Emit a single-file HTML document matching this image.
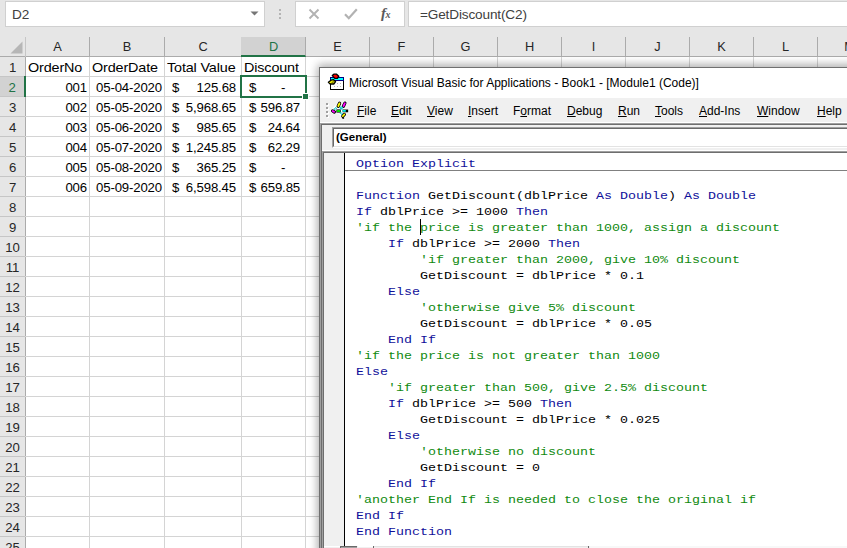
<!DOCTYPE html><html><head><meta charset="utf-8"><title>VBA</title><style>
*{box-sizing:border-box;margin:0;padding:0}
html,body{width:847px;height:548px;overflow:hidden;background:#fff}
body{position:relative;font-family:"Liberation Sans",sans-serif;}
.abs{position:absolute}
#top{left:0;top:0;width:847px;height:37px;background:#e6e6e6}
.box{background:#fff;border:1px solid #d0d0d0;position:absolute}
.xl{font-family:"Liberation Sans",sans-serif;font-size:14.4px;color:#000;white-space:pre;letter-spacing:-0.15px}
#hdr{left:0;top:37px;width:847px;height:20px;background:#e6e6e6;border-bottom:1px solid #ababab}
.ch{position:absolute;top:37px;height:20px;line-height:19px;text-align:center;font-size:12.8px;color:#262626;border-right:1px solid #ababab}
.rh{position:absolute;left:0;width:26px;height:20px;line-height:21px;text-align:center;font-size:13.2px;color:#262626;background:#e6e6e6;border-bottom:1px solid #c6c6c6;border-right:1px solid #ababab;letter-spacing:-0.15px}
.vl{position:absolute;width:1px;background:#d4d4d4;top:57px;height:500px}
.hl{position:absolute;height:1px;background:#d4d4d4;left:25px;width:830px}
.cell{position:absolute;height:20px;line-height:22px;}
.r{text-align:right;font-size:13.2px;line-height:21px}.n{font-size:13.2px;line-height:21px}.t{transform:scaleY(0.92);transform-origin:0 6px}
#vba{left:320px;top:69px;width:540px;height:490px;background:#fff;border:1px solid #6e6e6e}
.menu{position:absolute;top:0;font-size:12px;line-height:14px;color:#000;white-space:pre}
.menu u{text-decoration:underline;text-underline-offset:1px}
.code{position:absolute;left:356px;font-family:"Liberation Mono",monospace;font-size:13.33px;line-height:16px;white-space:pre;color:#000;transform:scaleY(0.88);transform-origin:0 11.5px}
.k{color:#10109a}.c{color:#0f8a0f}
</style></head><body>
<div id="top" class="abs"></div>
<div class="box" style="left:5px;top:1px;width:260px;height:26px"></div>
<div class="abs xl" style="left:12px;top:6px;line-height:18px;font-size:13.6px;color:#404040">D2</div>
<svg class="abs" style="left:250px;top:11px" width="9" height="5"><path d="M0.5 0.5h8l-4 4z" fill="#767676"/></svg>
<div class="abs" style="left:279px;top:9px;width:2px;height:2px;background:#b4b4b4"></div><div class="abs" style="left:279px;top:13px;width:2px;height:2px;background:#b4b4b4"></div><div class="abs" style="left:279px;top:17px;width:2px;height:2px;background:#b4b4b4"></div>
<div class="box" style="left:295px;top:1px;width:110px;height:26px"></div>
<svg class="abs" style="left:308px;top:8px" width="12" height="12"><path d="M1.5 1.5l9 9M10.5 1.5l-9 9" stroke="#b2b2b2" stroke-width="1.9" fill="none"/></svg>
<svg class="abs" style="left:344px;top:8px" width="14" height="12"><path d="M1 6.2l3.8 4l8-9" stroke="#b2b2b2" stroke-width="2.2" fill="none"/></svg>
<div class="abs" style="left:381px;top:4px;font-family:'Liberation Serif',serif;font-style:italic;font-weight:bold;font-size:15px;color:#5a5a5a;line-height:18px;letter-spacing:-0.5px">f<span style="font-size:10px">x</span></div>
<div class="box" style="left:408px;top:1px;width:450px;height:26px"></div>
<div class="abs xl" style="left:420px;top:6px;line-height:18px;font-size:13.6px;color:#404040">=GetDiscount(C2)</div>
<div id="hdr" class="abs"></div>
<div class="abs" style="left:25px;top:37px;width:1px;height:20px;background:#c6c6c6"></div>
<svg class="abs" style="left:10px;top:41px" width="13" height="13"><path d="M12.5 0.5v12h-12z" fill="#b6b6b6"/></svg>
<div class="ch" style="left:26px;width:64px;">A</div>
<div class="ch" style="left:90px;width:75px;">B</div>
<div class="ch" style="left:165px;width:77px;">C</div>
<div class="ch" style="left:241px;width:65px;background:#d2d2d2;color:#217346;border-bottom:2px solid #217346;padding-left:1px;">D</div>
<div class="ch" style="left:306px;width:64px;">E</div>
<div class="ch" style="left:370px;width:64px;">F</div>
<div class="ch" style="left:434px;width:64px;">G</div>
<div class="ch" style="left:498px;width:64px;">H</div>
<div class="ch" style="left:562px;width:64px;">I</div>
<div class="ch" style="left:626px;width:64px;">J</div>
<div class="ch" style="left:690px;width:64px;">K</div>
<div class="ch" style="left:754px;width:64px;">L</div>
<div class="ch" style="left:818px;width:64px;">M</div>
<div class="vl" style="left:89px"></div>
<div class="vl" style="left:164px"></div>
<div class="vl" style="left:241px"></div>
<div class="vl" style="left:305px"></div>
<div class="vl" style="left:369px"></div>
<div class="vl" style="left:433px"></div>
<div class="vl" style="left:497px"></div>
<div class="vl" style="left:561px"></div>
<div class="vl" style="left:625px"></div>
<div class="vl" style="left:689px"></div>
<div class="vl" style="left:753px"></div>
<div class="vl" style="left:817px"></div>
<div class="vl" style="left:881px"></div>
<div class="rh" style="top:57px;">1</div>
<div class="hl" style="top:76px"></div>
<div class="rh" style="top:77px;background:#d2d2d2;color:#217346;border-right:2px solid #217346;">2</div>
<div class="hl" style="top:96px"></div>
<div class="rh" style="top:97px;">3</div>
<div class="hl" style="top:116px"></div>
<div class="rh" style="top:117px;">4</div>
<div class="hl" style="top:136px"></div>
<div class="rh" style="top:137px;">5</div>
<div class="hl" style="top:156px"></div>
<div class="rh" style="top:157px;">6</div>
<div class="hl" style="top:176px"></div>
<div class="rh" style="top:177px;">7</div>
<div class="hl" style="top:196px"></div>
<div class="rh" style="top:197px;">8</div>
<div class="hl" style="top:216px"></div>
<div class="rh" style="top:217px;">9</div>
<div class="hl" style="top:236px"></div>
<div class="rh" style="top:237px;">10</div>
<div class="hl" style="top:256px"></div>
<div class="rh" style="top:257px;">11</div>
<div class="hl" style="top:276px"></div>
<div class="rh" style="top:277px;">12</div>
<div class="hl" style="top:296px"></div>
<div class="rh" style="top:297px;">13</div>
<div class="hl" style="top:316px"></div>
<div class="rh" style="top:317px;">14</div>
<div class="hl" style="top:336px"></div>
<div class="rh" style="top:337px;">15</div>
<div class="hl" style="top:356px"></div>
<div class="rh" style="top:357px;">16</div>
<div class="hl" style="top:376px"></div>
<div class="rh" style="top:377px;">17</div>
<div class="hl" style="top:396px"></div>
<div class="rh" style="top:397px;">18</div>
<div class="hl" style="top:416px"></div>
<div class="rh" style="top:417px;">19</div>
<div class="hl" style="top:436px"></div>
<div class="rh" style="top:437px;">20</div>
<div class="hl" style="top:456px"></div>
<div class="rh" style="top:457px;">21</div>
<div class="hl" style="top:476px"></div>
<div class="rh" style="top:477px;">22</div>
<div class="hl" style="top:496px"></div>
<div class="rh" style="top:497px;">23</div>
<div class="hl" style="top:516px"></div>
<div class="rh" style="top:517px;">24</div>
<div class="hl" style="top:536px"></div>
<div class="rh" style="top:537px;">25</div>
<div class="hl" style="top:556px"></div>
<div class="cell xl t" style="left:28px;top:57px">OrderNo</div>
<div class="cell xl t" style="left:92px;top:57px">OrderDate</div>
<div class="cell xl t" style="left:167px;top:57px">Total Value</div>
<div class="cell xl t" style="left:244px;top:57px">Discount</div>
<div class="cell xl r" style="left:25px;width:62px;top:77px">001</div>
<div class="cell xl r" style="left:89px;width:73px;top:77px">05-04-2020</div>
<div class="cell xl n" style="left:172px;top:77px">$</div>
<div class="cell xl r" style="left:164px;width:72px;top:77px">125.68</div>
<div class="cell xl n" style="left:249px;top:77px">$</div>
<div class="cell xl n" style="left:281px;top:77px">-</div>
<div class="cell xl r" style="left:25px;width:62px;top:97px">002</div>
<div class="cell xl r" style="left:89px;width:73px;top:97px">05-05-2020</div>
<div class="cell xl n" style="left:172px;top:97px">$</div>
<div class="cell xl r" style="left:164px;width:72px;top:97px">5,968.65</div>
<div class="cell xl n" style="left:249px;top:97px">$</div>
<div class="cell xl r" style="left:241px;width:59px;top:97px">596.87</div>
<div class="cell xl r" style="left:25px;width:62px;top:117px">003</div>
<div class="cell xl r" style="left:89px;width:73px;top:117px">05-06-2020</div>
<div class="cell xl n" style="left:172px;top:117px">$</div>
<div class="cell xl r" style="left:164px;width:72px;top:117px">985.65</div>
<div class="cell xl n" style="left:249px;top:117px">$</div>
<div class="cell xl r" style="left:241px;width:59px;top:117px">24.64</div>
<div class="cell xl r" style="left:25px;width:62px;top:137px">004</div>
<div class="cell xl r" style="left:89px;width:73px;top:137px">05-07-2020</div>
<div class="cell xl n" style="left:172px;top:137px">$</div>
<div class="cell xl r" style="left:164px;width:72px;top:137px">1,245.85</div>
<div class="cell xl n" style="left:249px;top:137px">$</div>
<div class="cell xl r" style="left:241px;width:59px;top:137px">62.29</div>
<div class="cell xl r" style="left:25px;width:62px;top:157px">005</div>
<div class="cell xl r" style="left:89px;width:73px;top:157px">05-08-2020</div>
<div class="cell xl n" style="left:172px;top:157px">$</div>
<div class="cell xl r" style="left:164px;width:72px;top:157px">365.25</div>
<div class="cell xl n" style="left:249px;top:157px">$</div>
<div class="cell xl n" style="left:281px;top:157px">-</div>
<div class="cell xl r" style="left:25px;width:62px;top:177px">006</div>
<div class="cell xl r" style="left:89px;width:73px;top:177px">05-09-2020</div>
<div class="cell xl n" style="left:172px;top:177px">$</div>
<div class="cell xl r" style="left:164px;width:72px;top:177px">6,598.45</div>
<div class="cell xl n" style="left:249px;top:177px">$</div>
<div class="cell xl r" style="left:241px;width:59px;top:177px">659.85</div>
<div class="abs" style="left:24px;top:76px;width:2px;height:21px;background:#217346"></div>
<div class="abs" style="left:240px;top:75px;width:67px;height:23px;border:2px solid #217346"></div>
<div class="abs" style="left:302px;top:93px;width:7px;height:7px;background:#217346;border:1px solid #fff"></div>
<div class="abs" style="left:319px;top:67px;width:540px;height:490px;background:#fff;border:1px solid #707070;box-shadow:0 0 9px 1px rgba(0,0,0,.28),0 -3px 8px 1px rgba(0,0,0,.10)"></div>
<svg class="abs" style="left:324px;top:70px" width="26" height="26" viewBox="0 0 26 26"><rect x="6.5" y="7.5" width="13" height="12" fill="#fff" stroke="#000"/><rect x="6" y="7" width="14" height="4" fill="#000080"/><rect x="7" y="8" width="12" height="2" fill="#00ffff"/><g fill="#b8b8b8"><rect x="13" y="13" width="1" height="1"/><rect x="16" y="13" width="1" height="1"/><rect x="10" y="16" width="1" height="1"/><rect x="13" y="16" width="1" height="1"/><rect x="16" y="16" width="1" height="1"/></g><path d="M8.3 5.6L9.8 4.2H12.6L14.8 6.2L13.4 8.4H10.8Z" fill="#ff0000" stroke="#000" stroke-width="1.3" stroke-linejoin="round"/><path d="M4.4 12.3L7 10.2L9.6 9.7L11.6 11.7L9.8 14H6.2Z" fill="#ffff00" stroke="#000" stroke-width="1.3" stroke-linejoin="round"/><path d="M7.6 12.6L10 11.6" stroke="#808000" stroke-width="1.4"/></svg>
<div class="abs" style="left:349px;top:75px;font-size:12px;line-height:16px;white-space:pre;color:#000">Microsoft Visual Basic for Applications - Book1 - [Module1 (Code)]</div>
<div class="abs" style="left:320px;top:98px;width:540px;height:24px;background:#f0f0f0;"></div>
<div class="abs" style="left:320px;top:122px;width:540px;height:1px;background:#fff;"></div>
<div class="abs" style="left:326px;top:103px;width:2px;height:2px;background:#a0a0a0;box-shadow:1px 1px 0 #fff"></div>
<div class="abs" style="left:326px;top:107px;width:2px;height:2px;background:#a0a0a0;box-shadow:1px 1px 0 #fff"></div>
<div class="abs" style="left:326px;top:111px;width:2px;height:2px;background:#a0a0a0;box-shadow:1px 1px 0 #fff"></div>
<div class="abs" style="left:326px;top:115px;width:2px;height:2px;background:#a0a0a0;box-shadow:1px 1px 0 #fff"></div>
<svg class="abs" style="left:324px;top:98px" width="28" height="26" viewBox="0 0 28 26"><g stroke="#fff" stroke-width="4.4" stroke-linecap="round" fill="none"><path d="M14.2 8.2L15.6 5.2M19.4 8.2L20.9 5.1M8.6 12.9L10.4 14M13 13h10M18.8 18.2L20.4 16.4M10 11.6L13 9M16 9l3 3M16 14l2 2"/></g><g stroke="#000" stroke-width="3.3" stroke-linecap="round" fill="none"><path d="M14.2 8.2L15.6 5.2M19.4 8.2L20.9 5.1M8.6 12.9L10.4 14M18.8 18.2L20.4 16.4"/></g><rect x="12.4" y="11.4" width="4.4" height="3.2" fill="#000"/><rect x="18.6" y="11.5" width="5.6" height="2.8" fill="#000"/><rect x="13" y="12" width="3.2" height="2" fill="#00e000"/><rect x="18.6" y="12" width="3.2" height="1.8" fill="#00e8e8"/><g stroke-width="1.8" stroke-linecap="round" fill="none"><path d="M14.3 8L15.5 5.4M18.9 18L20.3 16.5" stroke="#ffff00"/><path d="M19.5 8L20.8 5.3M8.7 13L10.2 13.9" stroke="#ff00ff"/></g><g stroke="#00c4c4" stroke-width="2" stroke-dasharray="1.1 0.7" fill="none"><path d="M10.2 11.6L13 9.2M16 9l2.8 2.8M18.6 9l-2.4 2.8M16.2 14.4l2 1.8"/></g><rect x="18.3" y="19.2" width="1.8" height="1.6" fill="#000"/></svg>
<div class="menu" style="left:357px;top:104px"><u>F</u>ile</div>
<div class="menu" style="left:391px;top:104px"><u>E</u>dit</div>
<div class="menu" style="left:427px;top:104px"><u>V</u>iew</div>
<div class="menu" style="left:468px;top:104px"><u>I</u>nsert</div>
<div class="menu" style="left:513px;top:104px">F<u>o</u>rmat</div>
<div class="menu" style="left:567px;top:104px"><u>D</u>ebug</div>
<div class="menu" style="left:618px;top:104px"><u>R</u>un</div>
<div class="menu" style="left:655px;top:104px"><u>T</u>ools</div>
<div class="menu" style="left:699px;top:104px"><u>A</u>dd-Ins</div>
<div class="menu" style="left:757px;top:104px"><u>W</u>indow</div>
<div class="menu" style="left:817px;top:104px"><u>H</u>elp</div>
<div class="abs" style="left:320px;top:123px;width:540px;height:490px;background:#a0a0a0;"></div>
<div class="abs" style="left:321px;top:124px;width:540px;height:490px;background:#6e6e6e;"></div>
<div class="abs" style="left:322px;top:125px;width:540px;height:490px;background:#f0f0f0;"></div>
<div class="abs" style="left:332px;top:127px;width:540px;height:21px;background:#fff;border-left:1px solid #a0a0a0;border-top:1px solid #a0a0a0;border-bottom:1px solid #fff"></div>
<div class="abs" style="left:333px;top:128px;width:540px;height:19px;background:#fff;border-left:1px solid #696969;border-top:1px solid #696969;border-bottom:1px solid #e3e3e3"></div>
<div class="abs" style="left:336px;top:130px;font-size:11.5px;font-weight:bold;line-height:14px;color:#000;white-space:pre">(General)</div>
<div class="abs" style="left:322px;top:150px;width:540px;height:1px;background:#fff;"></div>
<div class="abs" style="left:322px;top:151px;width:540px;height:490px;background:#a0a0a0;"></div>
<div class="abs" style="left:323px;top:152px;width:540px;height:490px;background:#6e6e6e;"></div>
<div class="abs" style="left:324px;top:153px;width:20px;height:490px;background:#f0f0f0;"></div>
<div class="abs" style="left:344px;top:153px;width:1px;height:490px;background:#000;"></div>
<div class="abs" style="left:345px;top:153px;width:540px;height:490px;background:#fff;"></div>
<div class="abs" style="left:345px;top:170px;width:540px;height:1px;background:#808080;"></div>
<div class="code" style="top:156px"><span class="k">Option Explicit</span></div>
<div class="code" style="top:188px"><span class="k">Function</span> GetDiscount(dblPrice <span class="k">As Double</span>) <span class="k">As Double</span></div>
<div class="code" style="top:204px"><span class="k">If</span> dblPrice &gt;= 1000 <span class="k">Then</span></div>
<div class="code" style="top:220px"><span class="c">'if the price is greater than 1000, assign a discount</span></div>
<div class="code" style="top:236px">    <span class="k">If</span> dblPrice &gt;= 2000 <span class="k">Then</span></div>
<div class="code" style="top:252px">        <span class="c">'if greater than 2000, give 10% discount</span></div>
<div class="code" style="top:268px">        GetDiscount = dblPrice * 0.1</div>
<div class="code" style="top:284px">    <span class="k">Else</span></div>
<div class="code" style="top:300px">        <span class="c">'otherwise give 5% discount</span></div>
<div class="code" style="top:316px">        GetDiscount = dblPrice * 0.05</div>
<div class="code" style="top:332px">    <span class="k">End If</span></div>
<div class="code" style="top:348px"><span class="c">'if the price is not greater than 1000</span></div>
<div class="code" style="top:364px"><span class="k">Else</span></div>
<div class="code" style="top:380px">    <span class="c">'if greater than 500, give 2.5% discount</span></div>
<div class="code" style="top:396px">    <span class="k">If</span> dblPrice &gt;= 500 <span class="k">Then</span></div>
<div class="code" style="top:412px">        GetDiscount = dblPrice * 0.025</div>
<div class="code" style="top:428px">    <span class="k">Else</span></div>
<div class="code" style="top:444px">        <span class="c">'otherwise no discount</span></div>
<div class="code" style="top:460px">        GetDiscount = 0</div>
<div class="code" style="top:476px">    <span class="k">End If</span></div>
<div class="code" style="top:492px"><span class="c">'another End If is needed to close the original if</span></div>
<div class="code" style="top:508px"><span class="k">End If</span></div>
<div class="code" style="top:524px"><span class="k">End Function</span></div>
<div class="abs" style="left:420px;top:219px;width:1px;height:16px;background:#000;"></div>
<div class="abs" style="left:324px;top:546px;width:540px;height:2px;background:#f0f0f0;"></div>
<div class="abs" style="left:324px;top:546px;width:16px;height:1px;background:#fff;"></div>
<div class="abs" style="left:340px;top:546px;width:17px;height:2px;background:#696969;"></div>
<div class="abs" style="left:341px;top:547px;width:16px;height:1px;background:#a0a0a0;"></div>
<div class="abs" style="left:358px;top:546px;width:15px;height:1px;background:#fff;"></div>
<div class="abs" style="left:373px;top:546px;width:1px;height:2px;background:#696969;"></div>
<div class="abs" style="left:374px;top:546px;width:214px;height:1px;background:#e3e3e3;"></div>
<div class="abs" style="left:588px;top:546px;width:1px;height:2px;background:#696969;"></div>
<div class="abs" style="left:590px;top:546px;width:540px;height:2px;background:#f8f8f8;"></div>
</body></html>
